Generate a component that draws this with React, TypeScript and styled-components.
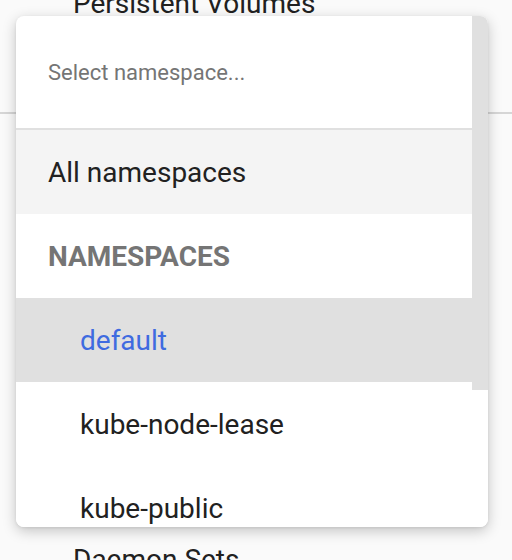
import React from 'react';
import styled, { createGlobalStyle } from 'styled-components';

const GlobalStyle = createGlobalStyle`
  html, body {
    margin: 0;
    padding: 0;
    background: #fafafa;
    font-family: Roboto, "Liberation Sans", sans-serif;
  }
`;

const Page = styled.div`
  position: relative;
  width: 512px;
  height: 560px;
  overflow: hidden;
  background: #fafafa;
`;

/* sidebar sitting behind the open picker */
const Nav = styled.div`
  display: flex;
  flex-direction: column;
  margin-top: -17px;
`;

const NavItem = styled.div<{ $gap?: number }>`
  height: 40px;
  flex-shrink: 0;
  display: flex;
  align-items: center;
  padding-left: 73px;
  margin-top: ${({ $gap }) => $gap || 0}px;
  font-size: 28px;
  color: #212121;
  white-space: nowrap;
`;

const NavDivider = styled.div`
  height: 2px;
  flex-shrink: 0;
  margin-top: 89px;
  background: #d6d6d6;
`;

const Popup = styled.div`
  position: absolute;
  top: 16px;
  left: 16px;
  width: 472px;
  height: 511px;
  display: flex;
  background: #fff;
  border-radius: 8px;
  overflow: hidden;
  box-shadow: 0 4px 14px rgba(0, 0, 0, 0.22), 0 1px 3px rgba(0, 0, 0, 0.08);
`;

const List = styled.div`
  flex: 1;
  display: flex;
  flex-direction: column;
  min-width: 0;
`;

const SearchBox = styled.div`
  height: 112px;
  flex-shrink: 0;
  display: flex;
  align-items: center;
  padding: 0 32px;
  border-bottom: 2px solid #e0e0e0;
`;

const SearchInput = styled.input`
  width: 100%;
  border: none;
  outline: none;
  padding: 0;
  background: transparent;
  font-family: inherit;
  font-size: 22px;
  color: #212121;

  &::placeholder {
    color: #757575;
  }
`;

const Option = styled.div<{ $nested?: boolean; $bg?: string; $active?: boolean }>`
  height: 84px;
  flex-shrink: 0;
  display: flex;
  align-items: center;
  padding-left: ${({ $nested }) => ($nested ? 64 : 32)}px;
  background: ${({ $bg }) => $bg || '#fff'};
  font-size: 28px;
  color: ${({ $active }) => ($active ? '#3f6be0' : '#212121')};
`;

const GroupLabel = styled(Option)`
  font-weight: 700;
  text-transform: uppercase;
  color: #757575;
`;

const ScrollTrack = styled.div`
  width: 16px;
  flex-shrink: 0;
  background: #fff;
`;

const ScrollThumb = styled.div`
  height: 374px;
  background: #e0e0e0;
`;

const namespaces = ['default', 'kube-node-lease', 'kube-public', 'kube-system'];

export default function App() {
  const selected = 'default';

  return (
    <Page>
      <GlobalStyle />
      <Nav>
        <NavItem>Persistent Volumes</NavItem>
        <NavDivider />
        <NavItem $gap={425}>Daemon Sets</NavItem>
      </Nav>
      <Popup>
        <List>
          <SearchBox>
            <SearchInput placeholder="Select namespace..." />
          </SearchBox>
          <Option $bg="#f4f4f4">All namespaces</Option>
          <GroupLabel>Namespaces</GroupLabel>
          {namespaces.map((ns) => (
            <Option
              key={ns}
              $nested
              $active={ns === selected}
              $bg={ns === selected ? '#e0e0e0' : '#fff'}
            >
              {ns}
            </Option>
          ))}
        </List>
        <ScrollTrack>
          <ScrollThumb />
        </ScrollTrack>
      </Popup>
    </Page>
  );
}
